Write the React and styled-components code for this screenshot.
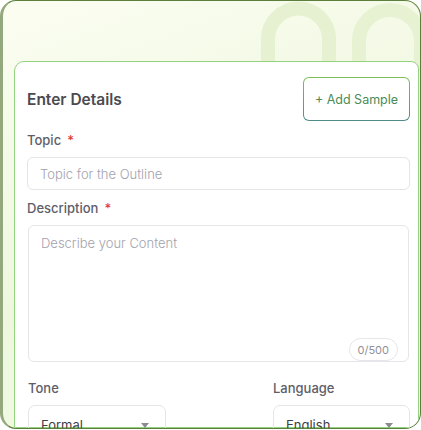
import styled, { createGlobalStyle } from "styled-components";

const GlobalStyle = createGlobalStyle`
  html, body {
    margin: 0;
    padding: 0;
    background: #ffffff;
  }
  body {
    font-family: Inter, "Noto Sans", sans-serif;
  }
  * {
    box-sizing: border-box;
  }
`;

const Frame = styled.div`
  position: relative;
  width: 421px;
  height: 429px;
  overflow: hidden;
  border: 1px solid #5d7f3e;
  border-left: 3px solid #93a97d;
  border-radius: 16px;
  background: linear-gradient(160deg, #fbfdf1 0%, #eef7de 55%, #f3fae8 100%);
  padding: 60px 0 0 11px;
`;

const Decor = styled.svg`
  position: absolute;
  top: 0;
  left: 0;
  pointer-events: none;
`;

const Card = styled.div`
  position: relative;
  height: 100%;
  background: #ffffff;
  border: 1px solid #93d27f;
  border-radius: 10px 8px 0 0;
  padding: 15px 8px 0 12px;
  margin-right: 1px;
`;

const Header = styled.div`
  display: flex;
  align-items: center;
  justify-content: space-between;
  margin-bottom: 11px;
`;

const Title = styled.h2`
  margin: 0;
  font-size: 15.5px;
  font-weight: 600;
  color: #4a4a4f;
`;

const AddButton = styled.button`
  width: 107px;
  height: 44px;
  border: 1px solid transparent;
  border-radius: 6px;
  background:
    linear-gradient(#ffffff, #ffffff) padding-box,
    linear-gradient(180deg, #7fc05a, #4f8c8a) border-box;
  color: #4b8b56;
  font-family: Inter, sans-serif;
  font-size: 12.5px;
  cursor: pointer;
`;

const Label = styled.div`
  font-size: 13px;
  font-weight: 500;
  color: #5e5e69;
  margin-bottom: 9px;
  span {
    color: #e53935;
    margin-left: 6px;
  }
`;

const TextInput = styled.input`
  display: block;
  width: 100%;
  height: 33px;
  border: 1px solid #e4e4e9;
  border-radius: 6px;
  padding: 0 12px;
  font-family: Inter, sans-serif;
  font-size: 13px;
  font-weight: 300;
  color: #333;
  margin-bottom: 10px;
  outline: none;
  &::placeholder {
    color: #a2a2ae;
  }
`;

const AreaWrap = styled.div`
  position: relative;
  height: 137px;
  margin: 0 1px 18px 1px;
`;

const TextArea = styled.textarea`
  display: block;
  width: 100%;
  height: 100%;
  border: 1px solid #e6e6ea;
  border-radius: 6px;
  padding: 9px 12px;
  resize: none;
  font-family: Inter, sans-serif;
  font-size: 13px;
  font-weight: 300;
  outline: none;
  &::placeholder {
    color: #a2a2ae;
  }
`;

const Counter = styled.div`
  position: absolute;
  right: 11px;
  bottom: 1px;
  height: 23px;
  padding: 0 8px;
  display: flex;
  align-items: center;
  border: 1px solid #e6e6ea;
  border-radius: 12px;
  font-size: 11px;
  color: #8f8f99;
  background: #fff;
`;

const Row = styled.div`
  display: flex;
  justify-content: space-between;
  padding-left: 1px;
`;

const Field = styled.div`
  width: ${(p) => p.$w}px;
`;

const Select = styled.div`
  height: 40px;
  border: 1px solid #e4e4e9;
  border-radius: 7px;
  display: flex;
  align-items: center;
  justify-content: space-between;
  padding: 0 16px 0 12px;
  font-size: 13px;
  color: #3f3f46;
`;

const Caret = styled.span`
  width: 0;
  height: 0;
  border-left: 4px solid transparent;
  border-right: 4px solid transparent;
  border-top: 5px solid #8b8b93;
`;

export default function App() {
  return (
    <>
      <GlobalStyle />
      <Frame>
        <Decor width="421" height="70" viewBox="0 0 421 70">
          <path
            d="M265 70 V38 a30 30 0 0 1 61 0 V70"
            fill="none"
            stroke="#e5f1d0"
            strokeWidth="14"
          />
          <path
            d="M356 70 V40 a31 31 0 0 1 62 0 V70"
            fill="none"
            stroke="#e7f2d3"
            strokeWidth="14"
          />
        </Decor>
        <Card>
          <Header>
            <Title>Enter Details</Title>
            <AddButton>+ Add Sample</AddButton>
          </Header>
          <Label>
            Topic<span>*</span>
          </Label>
          <TextInput placeholder="Topic for the Outline" />
          <Label>
            Description<span>*</span>
          </Label>
          <AreaWrap>
            <TextArea placeholder="Describe your Content" />
            <Counter>0/500</Counter>
          </AreaWrap>
          <Row>
            <Field $w={138}>
              <Label>Tone</Label>
              <Select>
                Formal
                <Caret />
              </Select>
            </Field>
            <Field $w={137}>
              <Label>Language</Label>
              <Select>
                English
                <Caret />
              </Select>
            </Field>
          </Row>
        </Card>
      </Frame>
    </>
  );
}
